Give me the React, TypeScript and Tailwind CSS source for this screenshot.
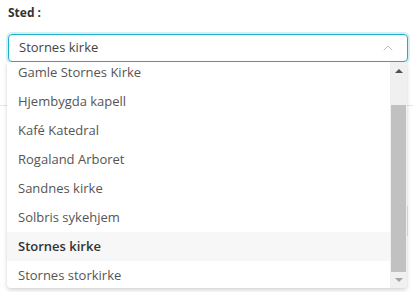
import { ChevronUp } from "lucide-react";

const places = [
  "Gamle Stornes Kirke",
  "Hjembygda kapell",
  "Kafé Katedral",
  "Rogaland Arboret",
  "Sandnes kirke",
  "Solbris sykehjem",
  "Stornes kirke",
  "Stornes storkirke",
];

export default function App() {
  const selected = "Stornes kirke";

  return (
    <div
      className="relative h-[292px] w-[413px] overflow-hidden bg-white text-[#444]"
      style={{ fontFamily: '"Open Sans", "Noto Sans", sans-serif' }}
    >
      {/* background form behind the menu */}
      <div className="absolute left-0 right-0 top-[105px] h-px bg-[#e6e6e6]" />
      <div className="absolute right-[5px] top-[206px] h-[30px] w-px bg-[#e3e3e3]" />

      <div className="relative pl-2 pr-[5px] pt-[4px]">
        <label className="block text-[12px] font-bold text-[#333]">Sted :</label>

        <div className="mt-[12px] flex h-[28px] items-center rounded-[4px] border border-[#1ab1c8] pl-[10px] pr-[11px] shadow-[0_0_0_2px_#d3eff4]">
          <span className="flex-1 text-[13px] text-[#444]">{selected}</span>
          <ChevronUp className="h-4 w-4 text-[#c4c4c4]" strokeWidth={1.5} />
        </div>

        {/* dropdown */}
        <div className="absolute left-[7px] top-[62px] flex h-[226px] w-[400px] overflow-hidden rounded-b-[4px] bg-white shadow-[0_2px_4px_rgba(0,0,0,0.18)]">
          <div className="flex-1 overflow-hidden">
            <ul className="-mt-[4px]">
              {places.map((p) => (
                <li
                  key={p}
                  className={
                    p === selected
                      ? "flex h-[29px] items-center bg-[#f7f7f7] pl-[11px] text-[13px] font-semibold text-[#333]"
                      : "flex h-[29px] items-center pl-[11px] text-[13px] text-[#555]"
                  }
                >
                  {p}
                </li>
              ))}
            </ul>
          </div>
          {/* scrollbar */}
          <div className="flex w-[17px] flex-col bg-[#f0f0f0]">
            <div className="flex h-[17px] items-center justify-center">
              <div className="h-0 w-0 border-x-[4px] border-b-[4px] border-x-transparent border-b-[#505050]" />
            </div>
            <div className="mx-[1px] mt-[26px] h-[167px] bg-[#c1c1c1]" />
            <div className="flex flex-1 items-center justify-center">
              <div className="h-0 w-0 border-x-[4px] border-t-[4px] border-x-transparent border-t-[#a3a3a3]" />
            </div>
          </div>
        </div>
      </div>
    </div>
  );
}
